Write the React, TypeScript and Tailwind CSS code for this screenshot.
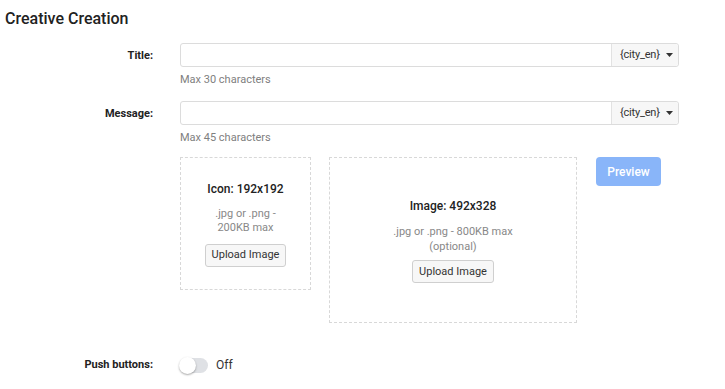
import React from "react";

function Caret() {
  return (
    <svg width="7" height="4" viewBox="0 0 7 4" className="ml-[6px]">
      <path d="M0 0 L7 0 L3.5 4 Z" fill="#333" />
    </svg>
  );
}

function InputRow({ label, help }: { label: string; help: string }) {
  return (
    <div className="flex">
      <div className="w-[153px] shrink-0 text-right text-[11px] font-bold text-[#222] pt-[5px]">{label}</div>
      <div className="ml-[27px] w-[499px]">
        <div className="flex h-[24px] border border-[#dcdcdc] rounded-[3px] bg-white">
          <div className="flex-1" />
          <div className="flex items-center w-[67px] bg-[#f7f7f7] border-l border-[#e2e2e2] rounded-r-[3px] pl-[8px] text-[11px] text-[#333] tracking-[-0.2px]">
            {"{city_en}"}
            <Caret />
          </div>
        </div>
        <div className="mt-[6px] text-[11px] text-[#808080] leading-[14px]">{help}</div>
      </div>
    </div>
  );
}

function UploadButton() {
  return (
    <button className="h-[23px] px-[6px] border border-[#cfcfcf] rounded-[3px] bg-[#f7f7f7] text-[11px] text-[#333]">
      Upload Image
    </button>
  );
}

export default function App() {
  return (
    <div className="w-[725px] h-[389px] bg-white overflow-hidden" style={{ fontFamily: "Roboto, 'Liberation Sans', sans-serif" }}>
      <div className="pl-[5px] pt-[9px] text-[16px] font-medium text-[#222] leading-[20px]">Creative Creation</div>
      <div className="mt-[14px]">
        <InputRow label="Title:" help="Max 30 characters" />
      </div>
      <div className="mt-[14px]">
        <InputRow label="Message:" help="Max 45 characters" />
      </div>
      <div className="flex mt-[12px]">
        <div className="w-[180px] shrink-0" />
        <div className="w-[131px] h-[133px] border border-dashed border-[#d8d8d8] flex flex-col items-center justify-center">
          <div className="text-[12px] font-medium text-[#222]">Icon: 192x192</div>
          <div className="mt-[9px] text-[11px] text-[#888] leading-[14px] text-center">.jpg or .png -<br />200KB max</div>
          <div className="mt-[6px]"><UploadButton /></div>
        </div>
        <div className="ml-[18px] w-[248px] h-[166px] border border-dashed border-[#d8d8d8] flex flex-col items-center justify-center">
          <div className="text-[12px] font-medium text-[#222]">Image: 492x328</div>
          <div className="mt-[9px] text-[11px] text-[#888] leading-[15px] text-center">.jpg or .png - 800KB max<br />(optional)</div>
          <div className="mt-[4px]"><UploadButton /></div>
        </div>
        <div className="ml-[19px]">
          <button className="w-[65px] h-[29px] rounded-[4px] bg-[#89b5f9] text-white text-[12px] font-medium">Preview</button>
        </div>
      </div>
      <div className="flex items-center mt-[33px]">
        <div className="w-[153px] text-right text-[11px] font-bold text-[#222]">Push buttons:</div>
        <div className="ml-[27px] flex items-center">
          <div className="relative w-[28px] h-[15px] rounded-full bg-[#dfe1e5]">
            <div className="absolute left-[-1px] top-[-1px] w-[17px] h-[17px] rounded-full bg-white shadow-[0_1px_2px_rgba(0,0,0,0.35)]" />
          </div>
          <span className="ml-[8px] text-[12px] text-[#333]">Off</span>
        </div>
      </div>
    </div>
  );
}
